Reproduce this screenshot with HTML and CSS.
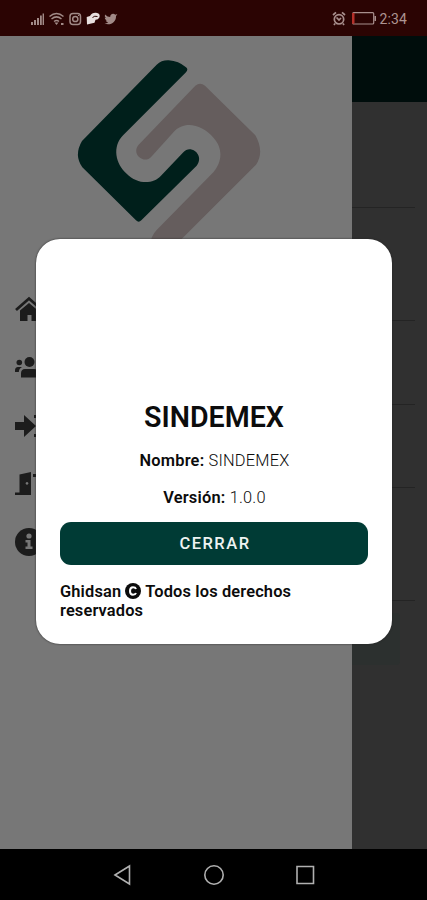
FILE: index.html
```html
<!DOCTYPE html>
<html lang="es">
<head>
<meta charset="utf-8">
<title>SINDEMEX</title>
<link rel="stylesheet" href="styles.css">
</head>
<body>
<div class="phone">
  <header class="status">
    <svg class="status-left" width="90" height="16" viewBox="0 0 90 16">
      <g fill="#a18a87">
        <path d="M1 11h2v3H1zM4 9h2v5H4zM7 7h2v7H7zM10 4.500h1.800V14H10zM12.600 2.500H14V14h-1.400z"/>
        <path d="M75 3.500q2.500 2.600 5.200 2.600C79.800 3 83.500 1.500 85.300 3.700l2-.6-1.300 2.100C86.200 11 80.500 15 74.500 12.500q2.300 0 3.700-1.200-2-.3-2.500-1.900h1.200q-2.200-.9-2.200-2.700l1.200.3Q74.200 5.500 75 3.500z"/>
      </g>
      <g fill="none" stroke="#a18a87" stroke-width="1.500">
        <path d="M19.500 5.500q7-6 14 0M21.500 8q5-4.200 10 0M24 10.500q2.700-2 5 0"/>
        <rect x="40" y="2.500" width="10.500" height="11" rx="3"/><circle cx="45.300" cy="8" r="2.600"/>
      </g>
      <path d="M24.500 11.500h4L26.500 14zM31 12h2.500v2H31zM48 4h1v1h-1z" fill="#a18a87"/>
      <path d="M60 5q2-3.500 6-3.200 4.500.4 3.500 4.500-1.500 2.700-4 2.500l-1 3-7.500 1.700-.3-7.500z" fill="#e8e0df"/>
      <path d="M62.500 6.500q2-2 5-1" fill="none" stroke="#2b0403"/>
    </svg>
    <div class="status-right">
      <svg width="14" height="15" viewBox="0 0 14 15" fill="none" stroke="#a88f8d" stroke-width="1.700">
        <circle cx="7" cy="8.300" r="4.700"/><path d="M1 4l3-2.600M13 4l-3-2.600M4.500 6.500L7 9l2-2M3 12.500l-1 1.500M11 12.500l1 1.500"/>
      </svg>
      <svg class="battery" width="25" height="13" viewBox="0 0 25 13">
        <rect x=".7" y=".7" width="21" height="11.300" rx="1" fill="none" stroke="#a88f8d" stroke-width="1.200"/>
        <path d="M0 1h2.500v10.700H0z" fill="#b5302a"/><path d="M22.500 4H24v5h-1.500z" fill="#a88f8d"/>
      </svg>
      <span class="clock">2:34</span>
    </div>
  </header>

  <main class="screen">
    <aside class="drawer">
      <svg class="logo" width="220" height="204" viewBox="0 0 660 612">
        <path fill="#001f1b" d="M290 74Q305 60 326 61Q356 63 378 82Q386 88 378 97L190 285C155 320 167 372 200 401C232 433 278 434 303 407L370 337C392 311 435 346 410 377L244 541Q236 549 228 541L67 382Q41 345 66 303Z"/>
        <path fill="#655d5d" d="M406 137Q420 125 435 137L586 286Q614 335 588 374L345 617H272Q270 591 290 570L460 397C485 368 491 327 461 294C427 254 374 240 341 276L274 350C253 374 212 342 236 314Z"/>
      </svg>
      <nav class="menu">
        <svg viewBox="0 0 30 30"><path d="M1 15L14 3.500 27 15" fill="none" stroke="#1c1c1c" stroke-width="2.800"/><path d="M5 15.500L14 8l9 7.500V26h-6.500v-6h-4v6H5z" fill="#1c1c1c"/></svg>
        <svg viewBox="0 0 30 30" fill="#1c1c1c"><circle cx="14.500" cy="9" r="5"/><circle cx="4.300" cy="9.500" r="2.800"/><path d="M6 24.500v-4q0-4.500 4-4.500h9q4 0 4 4.500v4zM0 19v-1.500q0-3.500 3-3.500h4q-3 1.500-3.200 5z"/></svg>
        <svg viewBox="0 0 30 30" fill="#1c1c1c"><path d="M0 11h9V4l12 11L9 26v-7H0zM19 4h7v3h-7zM19 23h7v3h-7z"/></svg>
        <svg viewBox="0 0 30 30" fill="#1c1c1c"><path fill-rule="evenodd" d="M0 23.500h4.500V5.500L16 3v23H0zM12 13a1.400 1.400 0 1 0 .01 0zM18 5h6v3h-6z"/></svg>
        <svg viewBox="0 0 30 30"><circle cx="14" cy="15" r="14" fill="#1c1c1c"/><circle cx="14" cy="9" r="2.600" fill="#777"/><path d="M10.500 13h5v6.500h2V22h-7v-2.500h2v-4h-2z" fill="#777"/></svg>
      </nav>
    </aside>
    <section class="page">
      <div class="page-bar"></div>
      <div class="row first"></div>
      <div class="row tall"></div>
      <div class="row short"></div>
      <div class="row short last"></div>
      <div class="row tall"></div>
      <div class="page-button"></div>
    </section>
  </main>

  <footer class="system-nav">
    <svg width="20" height="22" viewBox="0 0 20 22"><path d="M3 11L17.500 2v18z"/></svg>
    <svg width="22" height="22" viewBox="0 0 22 22"><circle cx="11" cy="11" r="9.200"/></svg>
    <svg width="20" height="22" viewBox="0 0 20 22"><path d="M1 2.500h16.500v17H1z"/></svg>
  </footer>

  <div class="dialog" role="dialog">
    <h1>SINDEMEX</h1>
    <p class="field"><b>Nombre:</b> SINDEMEX</p>
    <p class="field"><b>Versión:</b> 1.0.0</p>
    <button class="close">CERRAR</button>
    <p class="rights"><span>Ghidsan</span> <svg width="16" height="16" viewBox="0 0 16 16"><circle cx="8" cy="8" r="8" fill="#0c0c0c"/><path d="M11 6Q10.400 4.300 8 4.300 5 4.300 5 8t3 3.700q2.400 0 3-1.700" fill="none" stroke="#fff" stroke-width="2"/></svg> <span>Todos los derechos</span> <span>reservados</span></p>
  </div>
</div>
</body>
</html>
```
FILE: styles.css
```css
* { box-sizing: border-box; }
body { margin: 0; font-family: Roboto, "Liberation Sans", sans-serif; }
.phone {
  position: relative;
  display: flex;
  flex-direction: column;
  width: 427px;
  height: 900px;
  overflow: hidden;
}
.status {
  display: flex;
  justify-content: space-between;
  align-items: center;
  height: 36px;
  padding: 1px 20px 0 30px;
  background: #2b0403;
}
.status-right { display: flex; align-items: center; }
.battery { margin: 0 3px 0 6px; }
.clock { font-size: 14px; color: #ad9492; letter-spacing: 0.1px; }
.screen { display: flex; height: 813px; }
.drawer { width: 352px; background: #777; }
.logo { display: block; margin: 4px 0 0 60px; }
.menu {
  display: flex;
  flex-direction: column;
  gap: 28px;
  padding: 51px 0 0 15px;
}
.menu svg { width: 30px; height: 30px; }
.page { flex: 1; background: #303030; }
.page-bar { height: 66px; background: #000d0c; }
.row { height: 113px; margin-right: 12px; border-bottom: 1px solid #242424; }
.row.first { height: 106px; }
.row.short { height: 84px; }
.row.last { height: 83px; }
.page-button {
  height: 52px;
  margin: 12px 27px 0 0;
  border-radius: 0 4px 4px 0;
  background: #2c302f;
}
.system-nav {
  display: flex;
  flex: 1;
  justify-content: center;
  align-items: center;
  gap: 71px;
  background: #000;
}
.system-nav svg { fill: none; stroke: #b0b0b0; stroke-width: 1.6; }
.dialog {
  position: absolute;
  top: 239px;
  left: 36px;
  width: 356px;
  height: 405px;
  padding: 160px 24px 0;
  border-radius: 24px;
  background: #fff;
  box-shadow: 0 0 2px #222;
  color: #0c0c0c;
  text-align: center;
}
.dialog h1 { margin: 0; font-size: 28.6px; line-height: 36px; font-weight: 600; }
.field { margin: 16px 0 0; padding-left: 1px; font-size: 16.4px; line-height: 20px; font-weight: 300; letter-spacing: 0.2px; }
.field + .field { margin-top: 17px; }
.field b { font-weight: 600; }
.close {
  display: block;
  width: 308px;
  height: 43px;
  margin: 14px 0 0;
  padding: 0 0 0 2px;
  border: 0;
  border-radius: 11px;
  background: #003b35;
  color: #eef3f2;
  font: 500 16.5px/42px Roboto, sans-serif;
  letter-spacing: 1.5px;
}
.rights { margin: 17px 0 0; font-size: 16.4px; line-height: 19px; font-weight: 600; letter-spacing: 0.15px; text-align: left; }
.rights svg { vertical-align: -2px; }
```
